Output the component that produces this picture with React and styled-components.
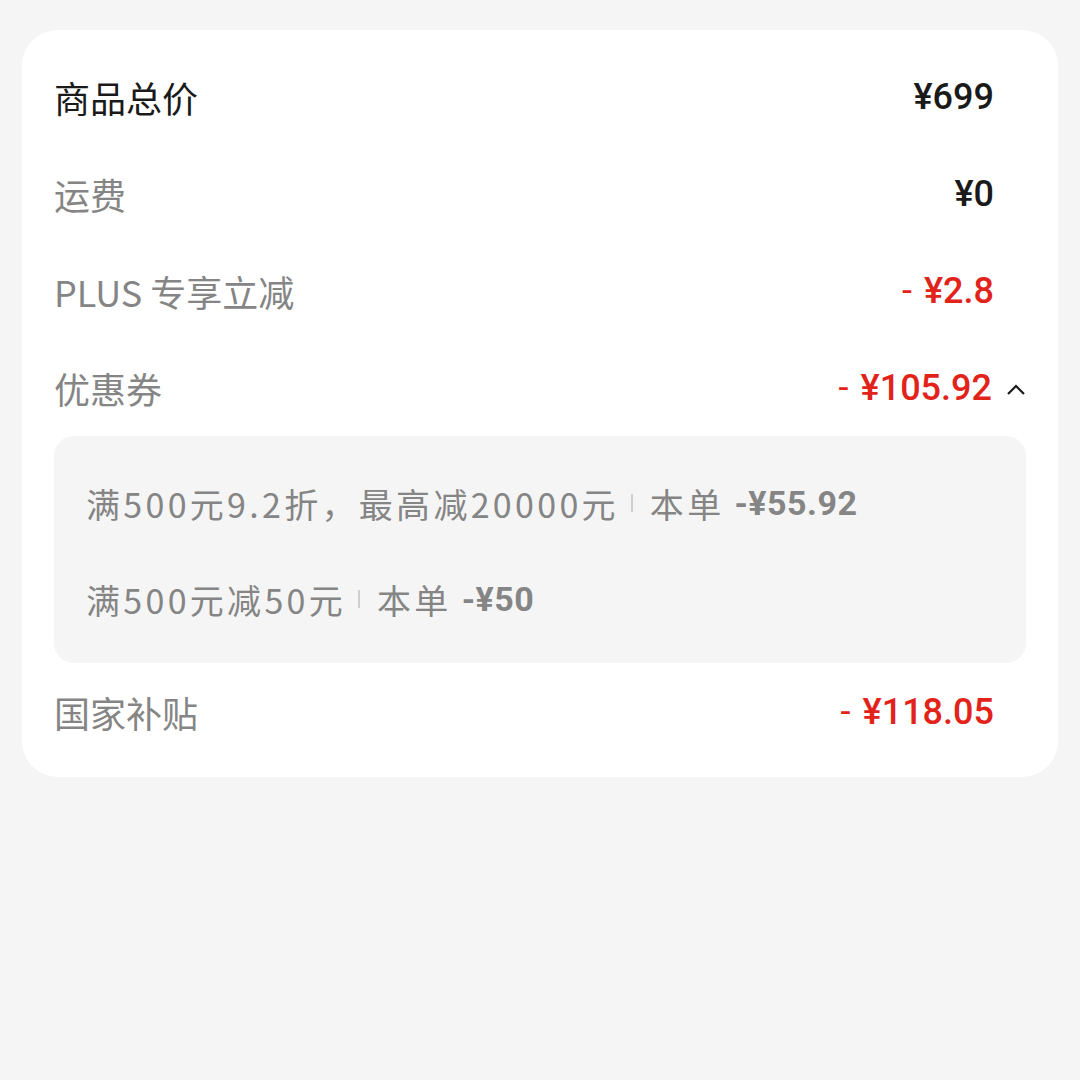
import styled, { createGlobalStyle } from 'styled-components';

const GlobalStyle = createGlobalStyle`
	body {
		margin: 0;
		background: #f5f5f5;
		font-family: "Noto Sans CJK SC", "Noto Sans", sans-serif;
	}
`;

const Page = styled.div`
	min-height: 1080px;
	padding: 30px 22px;
	box-sizing: border-box;
`;

const Card = styled.div`
	background: #fff;
	border-radius: 36px;
	padding: 18px 32px 17px;
`;

const Row = styled.div`
	display: flex;
	align-items: center;
	justify-content: space-between;
	height: 97px;
`;

const Label = styled.span`
	font-size: 36px;
	color: ${(p) => (p.$strong ? '#1a1a1a' : '#858585')};
`;

const Value = styled.span`
	display: flex;
	align-items: center;
	margin-right: ${(p) => (p.$toggle ? '0' : '32px')};
	font-family: Roboto, "Noto Sans", sans-serif;
	font-size: 36px;
	font-weight: 500;
	color: ${(p) => (p.$red ? '#e2231a' : '#1a1a1a')};

	.minus {
		margin-right: 12px;
		font-weight: 400;
	}
`;

const Chevron = styled.svg`
	width: 32px;
	height: 20px;
	margin-left: 2px;
`;

const CouponBox = styled.div`
	background: #f5f5f5;
	border-radius: 20px;
	padding: 19px 32px 16px;
`;

const CouponLine = styled.div`
	display: flex;
	align-items: center;
	height: 96px;
	font-size: 34px;
	color: #858585;
	letter-spacing: 3.3px;
`;

const Divider = styled.span`
	width: 2px;
	height: 18px;
	background: #cfcfcf;
	margin: 0 17px 0 12px;
`;

const Amount = styled.b`
	font-family: Roboto, "Noto Sans", sans-serif;
	font-weight: 700;
	margin-left: 10px;
	letter-spacing: 0.5px;
`;

const coupons = [
	{ id: 1, rule: '满500元9.2折，最高减20000元', amount: '-¥55.92' },
	{ id: 2, rule: '满500元减50元', amount: '-¥50' },
];

const Price = ({ children, red, toggle }) => (
	<Value $red={red} $toggle={toggle}>
		{red && <span className="minus">-</span>}
		{children}
		{toggle && (
			<Chevron viewBox="0 0 32 20">
				<polyline points="14,16 22,8 30,16" fill="none" stroke="#1a1a1a" strokeWidth="2.2" />
			</Chevron>
		)}
	</Value>
);

export default function App() {
	return (
		<Page>
			<GlobalStyle />
			<Card>
				<Row>
					<Label $strong>商品总价</Label>
					<Price>¥699</Price>
				</Row>
				<Row>
					<Label>运费</Label>
					<Price>¥0</Price>
				</Row>
				<Row>
					<Label>PLUS 专享立减</Label>
					<Price red>¥2.8</Price>
				</Row>
				<Row>
					<Label>优惠券</Label>
					<Price red toggle>¥105.92</Price>
				</Row>
				<CouponBox>
					{coupons.map((c) => (
						<CouponLine key={c.id}>
							{c.rule}
							<Divider />
							本单
							<Amount>{c.amount}</Amount>
						</CouponLine>
					))}
				</CouponBox>
				<Row>
					<Label>国家补贴</Label>
					<Price red>¥118.05</Price>
				</Row>
			</Card>
		</Page>
	);
}
